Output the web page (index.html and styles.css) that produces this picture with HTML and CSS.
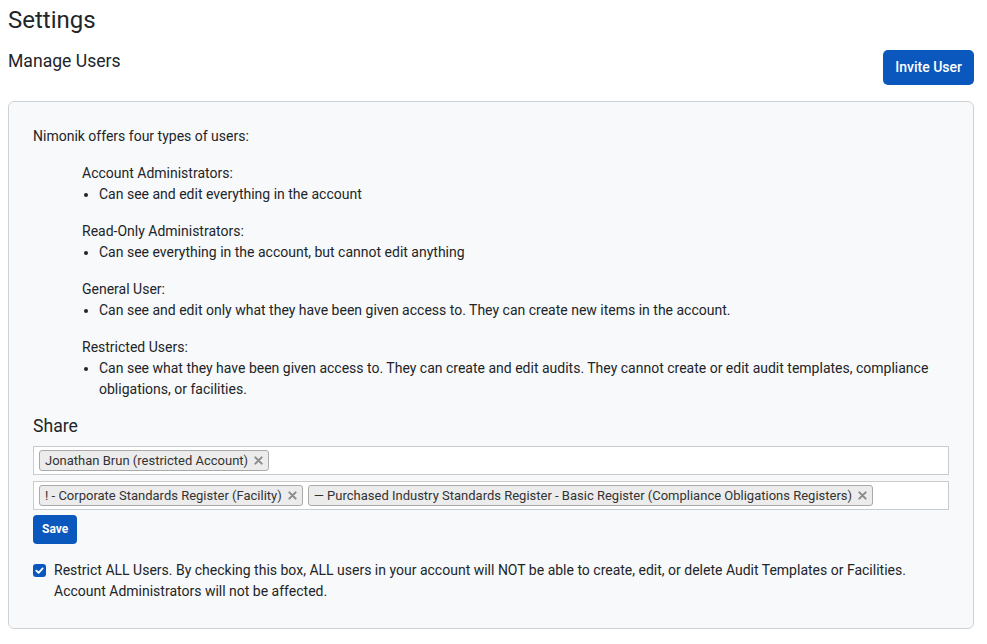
FILE: index.html
```html
<!DOCTYPE html>
<html>
<head>
<meta charset="utf-8">
<link rel="stylesheet" href="styles.css">
</head>
<body>
<h1 class="page-title">Settings</h1>
<div class="section-head">
  <h2 class="section-title">Manage Users</h2>
  <button class="btn btn-primary">Invite User</button>
</div>
<div class="card">
  <p class="intro">Nimonik offers four types of users:</p>
  <div class="types">
    <div class="type">
      <div class="type-name">Account Administrators:</div>
      <ul class="type-list"><li>Can see and edit everything in the account</li></ul>
    </div>
    <div class="type">
      <div class="type-name">Read-Only Administrators:</div>
      <ul class="type-list"><li>Can see everything in the account, but cannot edit anything</li></ul>
    </div>
    <div class="type">
      <div class="type-name">General User:</div>
      <ul class="type-list"><li>Can see and edit only what they have been given access to. They can create new items in the account.</li></ul>
    </div>
    <div class="type">
      <div class="type-name">Restricted Users:</div>
      <ul class="type-list"><li>Can see what they have been given access to. They can create and edit audits. They cannot create or edit audit templates, compliance obligations, or facilities.</li></ul>
    </div>
  </div>
  <h3 class="share-title">Share</h3>
  <div class="multi">
    <span class="chip">Jonathan Brun (restricted Account)<span class="chip-x"><svg viewBox="0 0 10 10" width="9" height="9"><path d="M1.5 1.5L8.5 8.5M8.5 1.5L1.5 8.5" stroke="#8a8a8a" stroke-width="2.2" stroke-linecap="round"/></svg></span></span>
  </div>
  <div class="multi">
    <span class="chip">! - Corporate Standards Register (Facility)<span class="chip-x"><svg viewBox="0 0 10 10" width="9" height="9"><path d="M1.5 1.5L8.5 8.5M8.5 1.5L1.5 8.5" stroke="#8a8a8a" stroke-width="2.2" stroke-linecap="round"/></svg></span></span>
    <span class="chip">— Purchased Industry Standards Register - Basic Register (Compliance Obligations Registers)<span class="chip-x"><svg viewBox="0 0 10 10" width="9" height="9"><path d="M1.5 1.5L8.5 8.5M8.5 1.5L1.5 8.5" stroke="#8a8a8a" stroke-width="2.2" stroke-linecap="round"/></svg></span></span>
  </div>
  <button class="btn btn-small">Save</button>
  <label class="check-row">
    <span class="checkbox"><svg viewBox="0 0 14 14" width="13" height="13"><path d="M3.6 7.2L6 9.5L10.4 4.8" fill="none" stroke="#fff" stroke-width="2" stroke-linecap="round" stroke-linejoin="round"/></svg></span>
    <span class="check-text">Restrict ALL Users. By checking this box, ALL users in your account will NOT be able to create, edit, or delete Audit Templates or Facilities. Account Administrators will not be affected.</span>
  </label>
</div>
</body>
</html>
```
FILE: styles.css
```css
* { box-sizing: border-box; }
body {
  margin: 8px 13px 8px 8px;
  font-family: Roboto, "Liberation Sans", Arial, sans-serif;
  color: #212529;
  background: #fff;
}
.page-title {
  margin: 0 0 17px;
  font-size: 24px;
  font-weight: 400;
  line-height: 25px;
}
.section-head {
  display: flex;
  justify-content: space-between;
  align-items: flex-start;
  margin-bottom: 16px;
}
.section-title {
  margin: 0;
  padding-top: 1px;
  font-size: 17.6px;
  font-weight: 400;
  line-height: 21px;
}
.btn {
  border: none;
  color: #fff;
  background: #0a57bd;
  font-family: Roboto, "Liberation Sans", Arial, sans-serif;
  cursor: pointer;
}
.btn-primary {
  font-size: 14px;
  font-weight: 500;
  line-height: 23px;
  padding: 6px 12px;
  border-radius: 5px;
}
.card {
  background: #f8f9fa;
  border: 1px solid #cfd2d5;
  border-radius: 6px;
  padding: 24px 24px 26px;
  font-size: 14px;
  line-height: 21px;
}
.intro { margin: 0 0 16px; }
.types { padding-left: 49px; }
.type-list {
  margin: 0 0 16px;
  padding-left: 17px;
}
.share-title {
  margin: 0 0 9px;
  font-size: 17.6px;
  font-weight: 400;
  line-height: 21px;
}
.multi {
  display: flex;
  flex-wrap: wrap;
  gap: 5px;
  background: #fff;
  border: 1px solid #c9cccf;
  min-height: 29px;
  padding: 3px 5px;
  margin-bottom: 6px;
}
.chip {
  display: inline-flex;
  align-items: center;
  height: 21px;
  background: #ececec;
  border: 1px solid #aaa;
  border-radius: 3px;
  padding: 0 5px;
  font-size: 13px;
  line-height: 19px;
  color: #333;
}
.chip-x {
  display: inline-flex;
  margin-left: 6px;
}
.btn-small {
  font-size: 12px;
  font-weight: 700;
  line-height: 19px;
  padding: 5px 9px;
  border-radius: 4px;
  margin-top: -1px;
  display: block;
}
.check-row {
  display: flex;
  align-items: flex-start;
  gap: 8px;
  margin-top: 16px;
}
.checkbox {
  flex: none;
  width: 13px;
  height: 13px;
  margin-top: 4px;
  background: #0a57bd;
  border-radius: 3px;
  display: flex;
}
```
